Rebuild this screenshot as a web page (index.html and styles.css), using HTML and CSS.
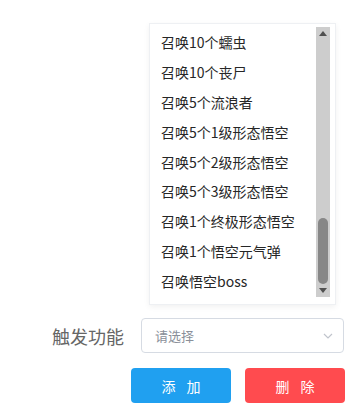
FILE: index.html
```html
<!DOCTYPE html>
<html lang="zh">
<head>
<meta charset="utf-8">
<link rel="stylesheet" href="styles.css">
</head>
<body>
<div class="page">
  <div class="dropdown">
    <ul class="list">
      <li>召唤10个蠕虫</li>
      <li>召唤10个丧尸</li>
      <li>召唤5个流浪者</li>
      <li>召唤5个1级形态悟空</li>
      <li>召唤5个2级形态悟空</li>
      <li>召唤5个3级形态悟空</li>
      <li>召唤1个终极形态悟空</li>
      <li>召唤1个悟空元气弹</li>
      <li>召唤悟空boss</li>
    </ul>
    <div class="scrollbar">
      <div class="arrow up"></div>
      <div class="track"><div class="thumb"></div></div>
      <div class="arrow down"></div>
    </div>
  </div>
  <div class="form-row">
    <label class="label">触发功能</label>
    <div class="select">
      <span class="placeholder">请选择</span>
      <svg class="chev" width="10" height="6" viewBox="0 0 10 6"><path d="M1 1 L5 5 L9 1" fill="none" stroke="#c0c4cc" stroke-width="1.2"/></svg>
    </div>
  </div>
  <div class="btn-row">
    <button class="btn primary">添 加</button>
    <button class="btn danger">删 除</button>
  </div>
</div>
</body>
</html>
```
FILE: styles.css
```css
html, body {
  margin: 0;
  padding: 0;
  background: #fff;
}
body {
  font-family: "Noto Sans CJK SC", "Microsoft YaHei", sans-serif;
  width: 358px;
  height: 412px;
  overflow: hidden;
}
.page {
  padding-top: 23px;
}
.dropdown {
  margin-left: 149px;
  width: 187px;
  height: 282px;
  box-sizing: border-box;
  background: #fff;
  border: 1px solid #eef0f3;
  box-shadow: 0 2px 6px rgba(0,0,0,0.06);
  display: flex;
}
.list {
  flex: 1;
  list-style: none;
  margin: 0;
  padding: 4px 0 0 0;
}
.list li {
  height: 29.9px;
  line-height: 28px;
  padding-left: 11px;
  font-size: 14px;
  color: #262626;
  white-space: nowrap;
}
.scrollbar {
  width: 14px;
  margin: 3px 5px 7px 0;
  background: #cdcdcd;
  display: flex;
  flex-direction: column;
}
.arrow {
  height: 13px;
  display: flex;
  align-items: center;
  justify-content: center;
}
.arrow::before {
  content: "";
  width: 0;
  height: 0;
  border-left: 4px solid transparent;
  border-right: 4px solid transparent;
}
.arrow.up::before {
  border-bottom: 5px solid #505050;
}
.arrow.down::before {
  border-top: 5px solid #505050;
}
.track {
  flex: 1;
  display: flex;
  flex-direction: column;
  justify-content: flex-end;
  align-items: center;
}
.thumb {
  width: 10px;
  height: 66px;
  background: #878787;
  border-radius: 5px;
}
.form-row {
  margin-top: 13px;
  display: flex;
  align-items: center;
}
.label {
  width: 141px;
  box-sizing: border-box;
  padding-right: 17px;
  text-align: right;
  font-size: 18px;
  color: #666;
}
.select {
  width: 203px;
  height: 35px;
  box-sizing: border-box;
  border: 1px solid #d6dbe3;
  border-radius: 4px;
  display: flex;
  align-items: center;
  justify-content: space-between;
  padding: 0 10px 0 13px;
}
.placeholder {
  font-size: 13px;
  color: #8a8f99;
}
.chev {
  display: block;
}
.btn-row {
  margin-top: 15px;
  padding-left: 131px;
  display: flex;
  gap: 14px;
}
.btn {
  width: 100px;
  height: 35px;
  border: none;
  border-radius: 4px;
  color: #fff;
  font-family: "Noto Sans CJK SC", sans-serif;
  font-size: 14px;
  letter-spacing: 4px;
  padding: 0 0 0 4px;
}
.btn.primary {
  background: #20a0f0;
}
.btn.danger {
  background: #ff4b4f;
}
```
